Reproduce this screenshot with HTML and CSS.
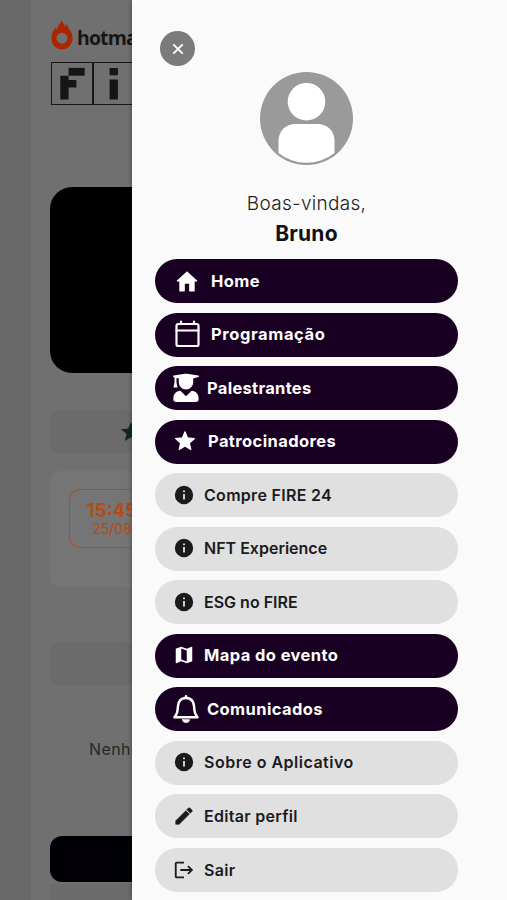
FILE: index.html
```html
<!DOCTYPE html>
<html lang="pt-BR">
<head>
  <meta charset="UTF-8">
  <meta name="viewport" content="width=device-width, initial-scale=1.0">
  <title>Hotmart FIRE</title>
  <link rel="stylesheet" href="styles.css">
</head>
<body>
  <!-- Page behind the menu -->
  <div class="page">
    <div class="brand">
      <svg class="flame" width="22" height="30" viewBox="0 0 22 30">
        <path fill="#ad2500" fill-rule="evenodd" d="M10.500 0c.7 2.700 2.900 3.500 3.400 6.600.8-.8 1-1.700 1-2.700 1.600 1.800 2.400 3.500 3.300 5.600 2.100 2 3.300 5 3.300 8.700C21.500 24.700 17 29.300 11 29.300S.5 24.700.5 18.200c0-4.500 2-8.500 4.300-10.900.2 1.400.7 2.200 1.500 2.700C6.200 6.500 8 4.500 9 3.200c.7-.9 1.200-2 1.500-3.200zM11 12.700a5.500 5.500 0 1 0 0 11 5.500 5.500 0 0 0 0-11z"/>
      </svg>
      <span class="brand-name">hotmart</span>
    </div>
    <div class="fire-logo">
      <div class="letter-box">
        <svg width="40" height="40" viewBox="0 0 41 40" fill="#151515"><path d="M17 4.500h16.500v8H17z"/><path d="M8.500 12.500H17V17h8v7.500h-8V37H8.500z"/></svg>
      </div>
      <div class="letter-box">
        <svg width="40" height="40" viewBox="0 0 41 40" fill="#151515"><path d="M16 4.500h8.500V12H16zM16 16.500h8.500V37H16z"/></svg>
      </div>
    </div>
    <div class="banner"></div>
    <div class="tab">
      <svg width="24" height="24" viewBox="0 0 24 24" fill="#10282d"><path d="M12 17.300l6.200 3.700-1.600-7L22 9.200l-7.200-.6L12 2 9.200 8.600 2 9.200 7.500 14l-1.700 7z"/></svg>
    </div>
    <div class="card">
      <div class="schedule">
        <span class="hour">15:45</span>
        <span class="day">25/08</span>
      </div>
    </div>
    <div class="tab tab-second"></div>
    <p class="empty">Nenhum evento</p>
    <div class="page-button"></div>
    <div class="page-end"></div>
  </div>

  <!-- Side menu -->
  <div class="drawer">
    <button class="close">
      <svg width="12" height="12" viewBox="0 0 12 12" fill="none" stroke="#fff" stroke-width="1.900"><path d="M1.300 1.300l9.400 9.400M10.700 1.300l-9.400 9.400"/></svg>
    </button>
    <svg class="avatar" width="93" height="93" viewBox="0 0 93 93">
      <circle cx="46.500" cy="46.500" r="46.500" fill="#9a9a9a"/>
      <circle cx="46.500" cy="29.700" r="18.800" fill="#fff"/>
      <path fill="#fff" d="M18.500 81V69c0-10 7-17 17-17h22c10 0 17 7 17 17v12a44.700 44.700 0 0 1-56 0z"/>
    </svg>
    <p class="welcome">Boas-vindas,</p>
    <h2 class="user-name">Bruno</h2>

    <div class="menu">
      <a class="item dark home">
        <svg width="26" height="26" viewBox="0 0 24 24" fill="currentColor"><path d="M10 21v-6.500h4V21c0 .5.400.800.900.800h3.300c.5 0 .9-.4.9-.9V12.500H21c.5 0 .7-.6.300-.9L12.700 3.600c-.4-.4-1-.4-1.400 0L2.700 11.600c-.4.300-.2.900.3.900h1.900v8.400c0 .5.400.9.900.9h3.300c.5 0 .9-.3.900-.8z"/></svg>
        <span>Home</span>
      </a>
      <a class="item dark programacao">
        <svg width="26" height="28" viewBox="0 0 26 28" fill="none" stroke="currentColor" stroke-width="2.200" stroke-linecap="round"><rect x="1.500" y="4" width="22" height="22" rx="1.800"/><path d="M1.500 10.500h22M6 1.500V4M19 1.500V4"/></svg>
        <span>Programação</span>
      </a>
      <a class="item dark palestrantes">
        <svg width="26" height="30" viewBox="0 0 26 30" fill="currentColor"><path d="M.6 2.600L12 .7c.7-.1 1.300-.1 2 0l11.400 1.900c.8.200.8 1.300 0 1.500L20.200 5.500v3.800c0 4-3.200 7.200-7.200 7.200S5.800 13.300 5.800 9.300V5.500L3.500 4.900v4.600l1 4.400c.1.400-.2.700-.6.700H1.100c-.4 0-.7-.3-.6-.7l1-4.400V4.400L.6 4.100c-.8-.2-.8-1.300 0-1.500z"/><path d="M7.300 17.800L13 23.200l5.700-5.400c4 .3 6.900 3.200 6.900 7.100v1.700c0 1.300-1 2.300-2.300 2.300H2.700C1.400 28.900.4 27.900.4 26.600v-1.700c0-3.900 2.900-6.800 6.900-7.100z"/></svg>
        <span>Palestrantes</span>
      </a>
      <a class="item dark patrocinadores">
        <svg width="22" height="22" viewBox="0 0 22 22" fill="currentColor" stroke="currentColor" stroke-width="1.200" stroke-linejoin="round"><path d="M11 1.800l2.600 6.100 6.800.6-5.100 4.500 1.500 6.500L11 16l-5.800 3.500L6.700 13 1.600 8.500l6.800-.6z"/></svg>
        <span>Patrocinadores</span>
      </a>
      <a class="item compre">
        <svg width="22" height="22" viewBox="0 0 24 24" fill="currentColor"><path d="M12 2a10 10 0 1 0 0 20 10 10 0 0 0 0-20zm1 15h-2v-6h2zm0-8h-2V7h2z"/></svg>
        <span>Compre FIRE 24</span>
      </a>
      <a class="item nft">
        <svg width="22" height="22" viewBox="0 0 24 24" fill="currentColor"><path d="M12 2a10 10 0 1 0 0 20 10 10 0 0 0 0-20zm1 15h-2v-6h2zm0-8h-2V7h2z"/></svg>
        <span>NFT Experience</span>
      </a>
      <a class="item esg">
        <svg width="22" height="22" viewBox="0 0 24 24" fill="currentColor"><path d="M12 2a10 10 0 1 0 0 20 10 10 0 0 0 0-20zm1 15h-2v-6h2zm0-8h-2V7h2z"/></svg>
        <span>ESG no FIRE</span>
      </a>
      <a class="item dark mapa">
        <svg width="22" height="22" viewBox="0 0 24 24" fill="currentColor"><path d="M20.500 3l-.2 0L15 5.100 9 3 3.400 4.900c-.2.100-.4.300-.4.500v15.100c0 .3.200.5.500.5l.2 0L9 18.900l6 2.100 5.600-1.900c.2-.1.400-.3.400-.5V3.500c0-.3-.2-.5-.5-.5zM15 19l-6-2.100V5l6 2.100z"/></svg>
        <span>Mapa do evento</span>
      </a>
      <a class="item dark comunicados">
        <svg width="26" height="30" viewBox="0 0 26 30" fill="none" stroke="currentColor" stroke-width="2.500" stroke-linejoin="round" stroke-linecap="round"><path d="M13 4c-5 0-7.600 3.500-8 8-.5 6-.7 7.500-3.500 11.300h23C21.700 19.500 21.500 18 21 12c-.4-4.500-3-8-8-8z"/><path d="M13 3.500V2.300"/><path d="M9.500 25.700h7c0 1.700-1.500 2.800-3.500 2.800s-3.500-1.100-3.500-2.800z" fill="currentColor" stroke-width=".8"/></svg>
        <span>Comunicados</span>
      </a>
      <a class="item sobre">
        <svg width="22" height="22" viewBox="0 0 24 24" fill="currentColor"><path d="M12 2a10 10 0 1 0 0 20 10 10 0 0 0 0-20zm1 15h-2v-6h2zm0-8h-2V7h2z"/></svg>
        <span>Sobre o Aplicativo</span>
      </a>
      <a class="item editar">
        <svg width="22" height="22" viewBox="0 0 24 24" fill="currentColor" stroke="currentColor" stroke-width=".7" stroke-linejoin="round"><path d="M3 17.250V21h3.750L17.810 9.940l-3.750-3.750zM20.710 7.040a1 1 0 0 0 0-1.410l-2.340-2.340a1 1 0 0 0-1.410 0l-1.830 1.830 3.750 3.750z"/></svg>
        <span>Editar perfil</span>
      </a>
      <a class="item sair">
        <svg width="22" height="22" viewBox="0 0 24 24" fill="currentColor"><path d="M17 7l-1.410 1.410L18.170 11H8v2h10.170l-2.580 2.580L17 17l5-5zM4 5h8V3H4c-1.100 0-2 .9-2 2v14c0 1.100.9 2 2 2h8v-2H4z"/></svg>
        <span>Sair</span>
      </a>
    </div>
  </div>
</body>
</html>
```

FILE: styles.css
```css
* {
  box-sizing: border-box;
}
body {
  font-family: Inter, "Open Sans", sans-serif;
  margin: 0;
  height: 900px;
  overflow: hidden;
  background-color: #696969;
  position: relative;
}
p, h2 {
  margin: 0;
}
.page {
  height: 900px;
  margin-left: 31px;
  padding: 20px 20px 0 19px;
  background-color: #707070;
  overflow: hidden;
}
.brand {
  display: flex;
  align-items: center;
  gap: 4px;
  height: 30px;
  padding-left: 1px;
}
.brand-name {
  font-family: "Open Sans", sans-serif;
  font-weight: 700;
  font-size: 19.5px;
  letter-spacing: -0.9px;
  color: #161616;
  padding-top: 4px;
}
.fire-logo {
  display: flex;
  margin: 12px 0 0 1px;
  width: 170px;
  height: 43px;
  border: 1px solid #171717;
}
.letter-box {
  width: 42px;
  border-right: 2px solid #171717;
}
.letter-box svg {
  display: block;
}
.banner {
  margin-top: 82px;
  height: 186px;
  border-radius: 22px;
  background-color: #000;
}
.tab {
  display: flex;
  align-items: center;
  margin-top: 37px;
  height: 43px;
  padding-left: 69px;
  border-radius: 8px;
  background-color: #6b6b6b;
}
.card {
  margin-top: 18px;
  height: 116px;
  padding: 18px 19px;
  border-radius: 10px;
  background-color: #757575;
}
.schedule {
  display: flex;
  flex-direction: column;
  align-items: center;
  width: 86px;
  height: 59px;
  padding-top: 10px;
  border: 1px solid #b84a12;
  border-radius: 11px;
  color: #b84a12;
}
.hour {
  font-size: 18.5px;
  line-height: 21px;
  font-weight: 700;
}
.day {
  font-size: 14px;
  line-height: 16px;
}
.tab-second {
  margin-top: 55px;
}
.empty {
  margin-top: 54px;
  padding-left: 39px;
  font-size: 16px;
  line-height: 20px;
  letter-spacing: 0.4px;
  color: #25282a;
  white-space: nowrap;
}
.page-button {
  margin-top: 77px;
  height: 46px;
  border-radius: 12px;
  background-color: #020006;
}
.page-end {
  margin-top: 2px;
  height: 30px;
  background-color: #6b6b6b;
}

/* Drawer */
.drawer {
  position: absolute;
  top: 0;
  right: 0;
  width: 375px;
  height: 900px;
  padding: 31px 49px 0 23px;
  background-color: #fafafa;
  box-shadow: 0 0 5px rgba(0, 0, 0, 0.4);
}
.close {
  display: flex;
  align-items: center;
  justify-content: center;
  width: 35px;
  height: 35px;
  margin-left: 5px;
  padding: 0;
  border: none;
  border-radius: 50%;
  background-color: #7b7b7b;
}
.avatar {
  display: block;
  margin: 6px auto 0;
}
.welcome {
  margin-top: 25px;
  text-align: center;
  font-size: 19px;
  line-height: 28px;
  font-weight: 300;
  letter-spacing: 0.3px;
  color: #222;
}
.user-name {
  text-align: center;
  font-size: 21px;
  line-height: 32px;
  font-weight: 700;
  letter-spacing: 0.2px;
  color: #111;
}
.menu {
  display: flex;
  flex-direction: column;
  gap: 9.55px;
  margin-top: 9px;
}
.item {
  display: flex;
  align-items: center;
  gap: 9px;
  height: 44px;
  padding: 0 18px 1px;
  border-radius: 22px;
  background-color: #e0e0e0;
  color: #1b1b1d;
  font-size: 16px;
  font-weight: 600;
  letter-spacing: 0.3px;
  white-space: nowrap;
}
.item svg {
  flex-shrink: 0;
}
.item.dark {
  background-color: #190022;
  color: #fff;
  font-size: 16.5px;
  font-weight: 700;
  letter-spacing: 0.4px;
}
.programacao {
  padding-left: 20px;
  gap: 10px;
}
.item.programacao {
  letter-spacing: 0.6px;
}
.home {
  padding-left: 19px;
  gap: 11px;
}
.palestrantes, .comunicados {
  gap: 8px;
}
.item.palestrantes {
  letter-spacing: 0.3px;
}
.patrocinadores {
  padding-left: 19px;
  gap: 12px;
}
.nft, .esg {
  letter-spacing: 0;
}
.sobre {
  letter-spacing: 0.5px;
}
```
